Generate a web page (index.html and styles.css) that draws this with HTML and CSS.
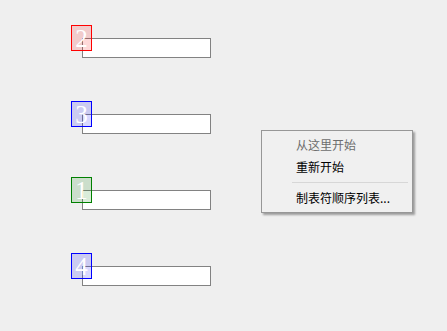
FILE: index.html
```html
<!DOCTYPE html>
<html lang="zh">
<head>
    <meta charset="UTF-8">
    <title>Tab Order</title>
    <link rel="stylesheet" href="styles.css">
</head>
<body>

<div class="fields">
    <div class="field">
        <input type="text" class="box">
        <span class="badge red">2</span>
    </div>
    <div class="field">
        <input type="text" class="box">
        <span class="badge blue">3</span>
    </div>
    <div class="field">
        <input type="text" class="box">
        <span class="badge green">1</span>
    </div>
    <div class="field">
        <input type="text" class="box">
        <span class="badge blue">4</span>
    </div>
</div>

<div class="menu">
    <div class="menu-item disabled">从这里开始</div>
    <div class="menu-item">重新开始</div>
    <div class="menu-sep"></div>
    <div class="menu-item">制表符顺序列表...</div>
</div>

</body>
</html>
```

FILE: styles.css
```css
* {
    box-sizing: border-box;
    margin: 0;
    padding: 0;
}

body {
    background-color: #efefef;
    font-family: "Noto Sans CJK SC", "Noto Sans", sans-serif;
    width: 447px;
    height: 331px;
    overflow: hidden;
}

.fields {
    display: flex;
    flex-direction: column;
    gap: 56px;
    padding-top: 38px;
    padding-left: 82px;
}

.field {
    position: relative;
    width: 129px;
    height: 20px;
}

.box {
    display: block;
    width: 129px;
    height: 20px;
    background: white;
    border: 1px solid #828282;
    outline: none;
}

.badge {
    position: absolute;
    left: -11px;
    top: -13px;
    width: 21px;
    height: 26px;
    border: 1px solid;
    color: white;
    font-family: "Liberation Serif", serif;
    font-size: 25px;
    line-height: 25px;
    text-align: center;
}

.badge.red {
    border-color: #ff0000;
    background: rgba(255, 0, 0, 0.15);
}

.badge.blue {
    border-color: #0000ff;
    background: rgba(0, 0, 255, 0.15);
}

.badge.green {
    border-color: #008000;
    background: rgba(0, 128, 0, 0.15);
}

.menu {
    position: absolute;
    left: 261px;
    top: 130px;
    width: 152px;
    padding: 3px 0;
    background: #f0f0f0;
    border: 1px solid #979797;
    box-shadow: 2px 2px 2px rgba(0, 0, 0, 0.35);
}

.menu-item {
    height: 22px;
    line-height: 22px;
    padding-left: 34px;
    font-size: 12px;
    color: #000;
}

.menu-item.disabled {
    color: #6d6d6d;
}

.menu-sep {
    height: 1px;
    background: #d7d7d7;
    margin: 4px 4px 4px 30px;
}
```
